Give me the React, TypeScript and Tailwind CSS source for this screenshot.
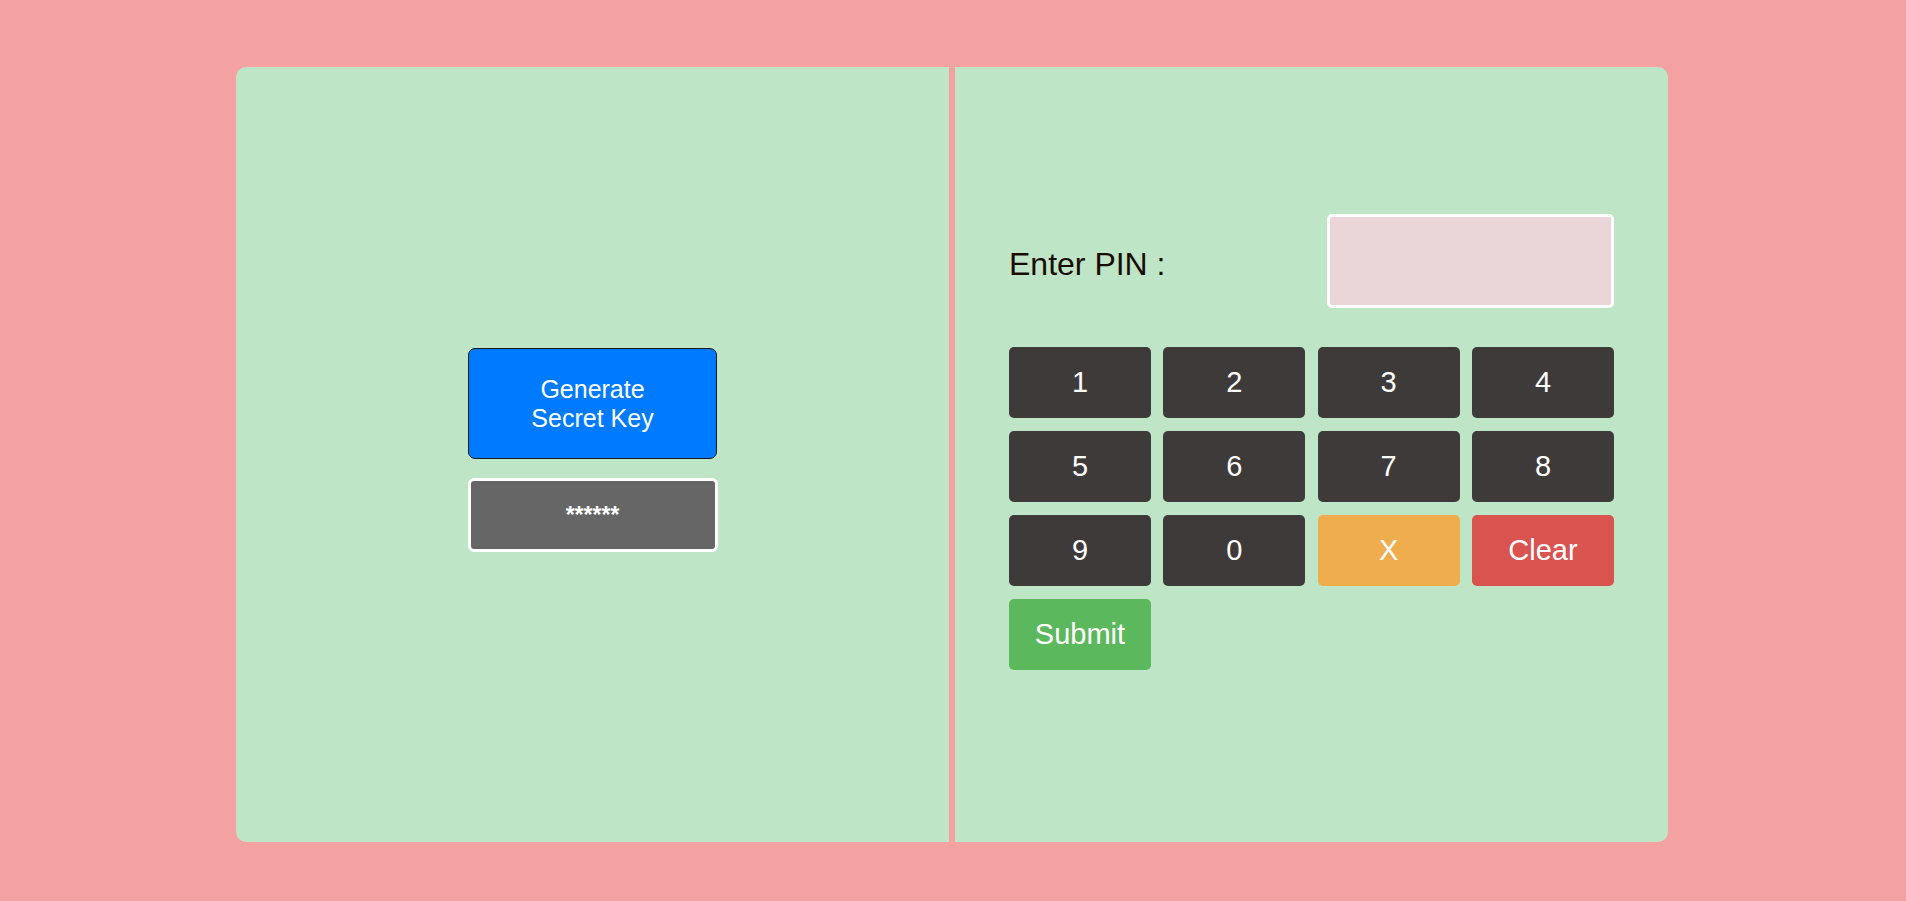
import React from "react";

const keys: { label: string; cls: string }[] = [
  { label: "1", cls: "bg-[#3e3a3a]" },
  { label: "2", cls: "bg-[#3e3a3a]" },
  { label: "3", cls: "bg-[#3e3a3a]" },
  { label: "4", cls: "bg-[#3e3a3a]" },
  { label: "5", cls: "bg-[#3e3a3a]" },
  { label: "6", cls: "bg-[#3e3a3a]" },
  { label: "7", cls: "bg-[#3e3a3a]" },
  { label: "8", cls: "bg-[#3e3a3a]" },
  { label: "9", cls: "bg-[#3e3a3a]" },
  { label: "0", cls: "bg-[#3e3a3a]" },
  { label: "X", cls: "bg-[#efad4e]" },
  { label: "Clear", cls: "bg-[#d9534f]" },
  { label: "Submit", cls: "bg-[#5cb85c]" },
];

export default function App() {
  return (
    <div
      className="min-h-screen w-full bg-[#f4a1a1] pt-[67px] pl-[236px]"
      style={{ fontFamily: '"Liberation Sans", Arial, sans-serif' }}
    >
      <div className="flex w-[1432px] h-[775px] gap-[6px]">
        <div className="w-[713px] shrink-0 bg-[#bfe5c7] rounded-l-[10px] flex flex-col items-center justify-center pb-[9px]">
          <button className="w-[249px] h-[111px] bg-[#007bff] border-[1.5px] border-[#1a1a1a] rounded-[7px] text-white text-[25px] leading-[29px]">
            Generate
            <br />
            Secret Key
          </button>
          <div className="mt-[19px] w-[250px] h-[74px] bg-[#666666] border-[3px] border-white rounded-[6px] flex items-center justify-center text-white text-[23px] font-bold">
            ******
          </div>
        </div>
        <div className="w-[713px] shrink-0 bg-[#bfe5c7] rounded-r-[10px] pt-[147px] pl-[54px]">
          <div className="flex items-center justify-between w-[605px]">
            <div className="text-[32px] text-[#1a0c04] pt-[6px]">Enter PIN :</div>
            <div className="w-[287px] h-[94px] bg-[#ead6d8] border-[3px] border-white rounded-[5px]" />
          </div>
          <div className="mt-[39px] grid grid-cols-[repeat(4,142px)] auto-rows-[71px] gap-x-[12.33px] gap-y-[13px]">
            {keys.map((k) => (
              <button
                key={k.label}
                className={`${k.cls} rounded-[5px] text-white text-[29px] flex items-center justify-center`}
              >
                {k.label}
              </button>
            ))}
          </div>
        </div>
      </div>
    </div>
  );
}
